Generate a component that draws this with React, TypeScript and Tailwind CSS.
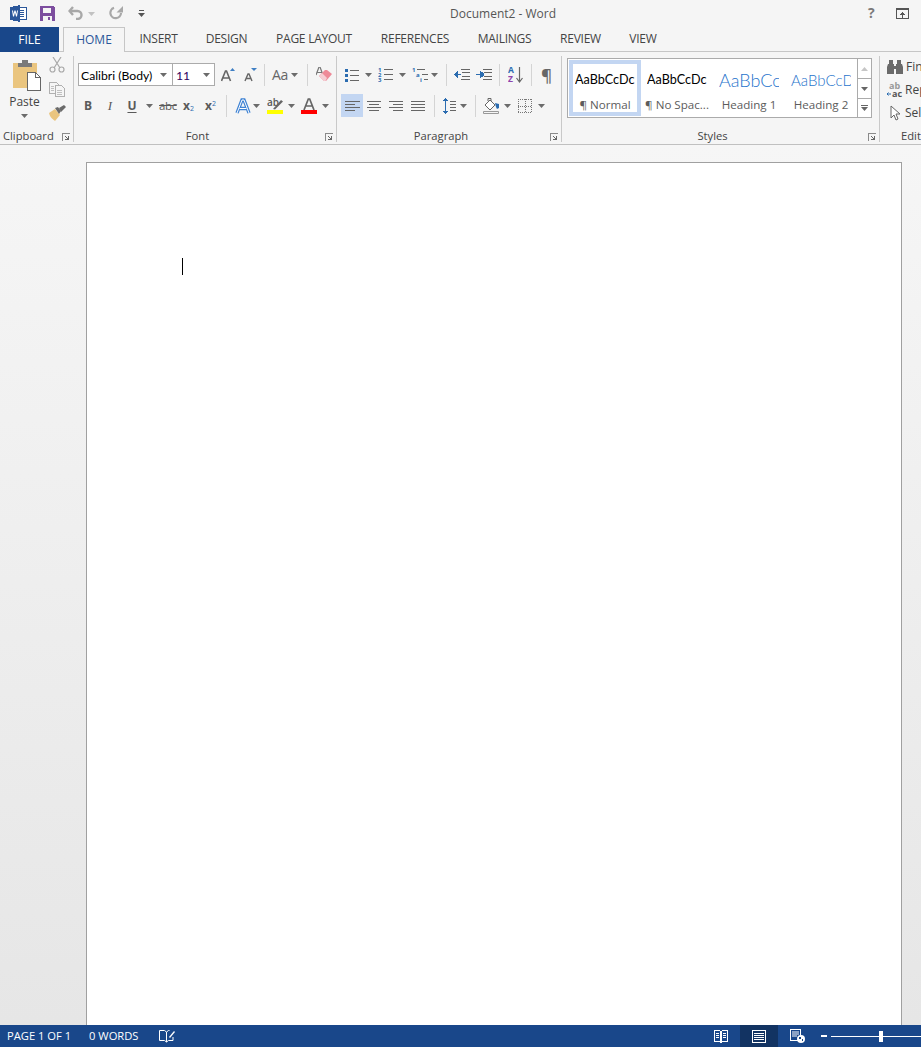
import React from "react";

const G = "#666666";
const Caret = ({ c = "#6b6b6b", cls = "" }: { c?: string; cls?: string }) => (
  <svg width="7" height="4" viewBox="0 0 7 4" className={"shrink-0 " + cls}><path d="M0 0h7L3.5 4z" fill={c} /></svg>
);
const Launcher = () => (
  <svg width="8" height="8" viewBox="0 0 8 8" className="shrink-0" shapeRendering="crispEdges">
    <path d="M0 0h8v1H1v7H0z" fill="#8a8a8a" />
    <path d="M3 3h1v1h1v1h1V3h1v4H3V6h2V5H4V4H3z" fill="#666" />
  </svg>
);
const VSep = ({ cls = "" }: { cls?: string }) => <div className={"w-px h-[22px] bg-[#d4d4d4] shrink-0 " + cls} />;
const Lines = ({ rows, w = 16, h = 14 }: { rows: [number, number, number][]; w?: number; h?: number }) => (
  <svg width={w} height={h} viewBox={`0 0 ${w} ${h}`} shapeRendering="crispEdges" className="shrink-0">
    {rows.map(([x, y, l], i) => <rect key={i} x={x} y={y} width={l} height={1} fill={G} />)}
  </svg>
);
const Group = ({ w, label, children, center }: { w: string; label: string; children: React.ReactNode; center?: string }) => (
  <div className={"flex flex-col h-[86px] mt-[4px] border-r border-[#c9c9c9] shrink-0 " + w}>
    <div className="flex-1 min-h-0">{children}</div>
    <div className={"flex items-center h-[12px] text-[11.2px] leading-[12px] text-[#444] " + (center || "")}>{label}</div>
  </div>
);

const tabs: [string, string][] = [
  ["INSERT", "w-[67px]"], ["DESIGN", "w-[69px]"], ["PAGE LAYOUT", "w-[106px]"], ["REFERENCES", "w-[96px]"],
  ["MAILINGS", "w-[83px]"], ["REVIEW", "w-[69px]"], ["VIEW", "w-[56px]"],
];

const StyleItem = ({ sample, label, sel, cls }: { sample: string; label: string; sel?: boolean; cls: string }) => (
  <div className={"w-[72px] flex flex-col items-center shrink-0 h-[56px] bg-white " + (sel ? "border-[4px] border-[#c3d6f2]" : "border-[4px] border-white")}>
    <div className="w-[60px] h-[20px] mt-[6px] shrink-0 overflow-hidden whitespace-nowrap flex items-center">
      <span className={cls}>{sample}</span>
    </div>
    <div className="text-[11.6px] h-[16px] shrink-0 leading-[16px] text-[#5c5c5c] whitespace-nowrap mt-[7px]">{label}</div>
  </div>
);

export default function App() {
  return (
    <div className="w-[921px] h-[1047px] flex flex-col overflow-hidden bg-[#f5f5f5] font-['Open_Sans',sans-serif] text-[12px] text-[#444]">
      {/* title bar */}
      <div className="h-[27px] flex items-center shrink-0 relative">
        <svg width="17" height="17" viewBox="0 0 17 17" className="ml-[10px] -mt-px" shapeRendering="crispEdges">
          <rect x="5.500" y="2.500" width="11" height="12" fill="#fff" stroke="#2b579a" />
          <path d="M10 5h4M10 7h4M10 9h4M10 11h4" stroke="#2b579a" />
          <path d="M0 2l10-2v17L0 15z" fill="#2b579a" />
          <path d="M2 5.500l1 6h1l1-4 1 4h1l1-6H7l-.5 3.500L5.500 5.500h-1L3.500 9 3 5.500z" fill="#fff" shapeRendering="auto" />
        </svg>
        <svg width="15" height="15" viewBox="0 0 15 15" className="ml-[13px] -mt-px" shapeRendering="crispEdges">
          <path d="M0 0h13l2 2v13H0z" fill="#7d4e9f" />
          <rect x="3" y="2" width="8" height="5" fill="#f5f5f5" />
          <rect x="3" y="10" width="9" height="5" fill="#f5f5f5" />
          <rect x="8" y="11" width="2" height="3" fill="#7d4e9f" />
        </svg>
        <svg width="15" height="14" viewBox="0 0 15 14" className="ml-[13px] -mt-px">
          <path d="M5 1L1.500 5 5 9" fill="none" stroke="#a8a8a8" strokeWidth="2.400" />
          <path d="M2 5h7.500a4 4 0 0 1 0 8H8" fill="none" stroke="#a8a8a8" strokeWidth="2.400" />
        </svg>
        <Caret c="#c2c2c2" cls="ml-[5px]" />
        <svg width="14" height="14" viewBox="0 0 14 14" className="ml-[14px] -mt-px">
          <path d="M5 1.800A5.300 5.300 0 1 0 12 7" fill="none" stroke="#a8a8a8" strokeWidth="2.200" />
          <path d="M14 0v6.500H7.500z" fill="#a8a8a8" />
        </svg>
        <svg width="7" height="7" viewBox="0 0 7 7" className="ml-[15px]" shapeRendering="crispEdges">
          <rect x="1" y="0" width="5" height="1" fill="#555" />
          <path d="M0 3h7L3.500 7z" fill="#555" shapeRendering="auto" />
        </svg>
        <div className="absolute left-[450px] top-[6px] text-[12px] leading-[16px] text-[#555] whitespace-nowrap">Document2 - Word</div>
        <div className="absolute left-[868px] top-[5px] text-[14px] leading-[16px] font-bold text-[#7a7a7a]">?</div>
        <svg width="13" height="11" viewBox="0 0 13 11" className="absolute left-[896px] top-[8px]" shapeRendering="crispEdges">
          <rect x="0.500" y="0.500" width="12" height="10" fill="none" stroke="#555" />
          <rect x="0" y="0" width="13" height="2" fill="#555" />
          <path d="M6 4h1v1h1v1h1v1H7v3H6V7H4V6h1V5h1z" fill="#555" />
        </svg>
      </div>

      {/* tabs */}
      <div className="h-[25px] flex items-stretch shrink-0 relative border-b border-[#c6c6c6]">
        <div className="w-[59px] h-[25px] bg-[#19478a] text-white flex items-center justify-center text-[12px]">FILE</div>
        <div className="ml-[4px] w-[62px] h-[25px] bg-[#f5f5f5] border border-b-0 border-[#c6c6c6] flex items-center justify-center text-[#2b579a] text-[12px] z-10">HOME</div>
        {tabs.map(([t, w]) => (
          <div key={t} className={"flex items-center justify-center text-[#444] text-[12px] tracking-[-0.25px] whitespace-nowrap " + w}>{t}</div>
        ))}
      </div>

      {/* ribbon */}
      <div className="h-[93px] flex shrink-0 border-b border-[#c0c0c0] overflow-hidden">
        <div className="relative">
          <Group w="w-[74px]" label="Clipboard" center="pl-[3px]">
            <div className="flex">
              <div className="w-[49px] flex flex-col items-center">
                <svg width="28" height="31" viewBox="0 0 28 31" className="mt-[4px] self-start ml-[13px]" shapeRendering="crispEdges">
                  <rect x="0" y="3" width="24" height="25" fill="#eac57f" />
                  <rect x="5" y="3" width="14" height="4" fill="#7a7a7a" />
                  <rect x="9" y="0" width="6" height="4" fill="#7a7a7a" />
                  <path d="M14.500 12.500h8l5 5v13h-13z" fill="#fff" stroke="#666" />
                  <path d="M22.500 12.500v5h5" fill="none" stroke="#666" />
                </svg>
                <div className="text-[12px] leading-[16px] text-[#444] mt-[3px]">Paste</div>
                <Caret cls="mt-[4px]" />
              </div>
              <div className="flex flex-col">
                <svg width="16" height="16" viewBox="0 0 16 16" className="mt-[1px]">
                  <path d="M4 0l7 11M12 0L5 11" stroke="#a9a9a9" strokeWidth="1.200" fill="none" />
                  <circle cx="3.500" cy="12.500" r="2.500" fill="none" stroke="#a9a9a9" strokeWidth="1.200" />
                  <circle cx="12.500" cy="12.500" r="2.500" fill="none" stroke="#a9a9a9" strokeWidth="1.200" />
                </svg>
                <svg width="16" height="15" viewBox="0 0 16 15" className="mt-[9px]" shapeRendering="crispEdges">
                  <path d="M.5.500h7l2 2v9h-9z" fill="#f5f5f5" stroke="#b0b0b0" />
                  <path d="M6.500 3.500h6l3 3v8h-9z" fill="#f5f5f5" stroke="#b0b0b0" />
                  <path d="M2 4h3M2 6h3M2 8h3M8 8h5M8 10h5M8 12h5" stroke="#c0c0c0" />
                </svg>
                <svg width="17" height="16" viewBox="0 0 17 16" className="mt-[8px]">
                  <path d="M0 8l6-4 5 6-5 6C5 15 1 13 0 8z" fill="#eac57f" />
                  <path d="M6 3l3-1 3 4-2 3z" fill="#6a6a6a" />
                  <path d="M10 3l5-3 2 2-5 5z" fill="#6a6a6a" />
                </svg>
              </div>
            </div>
          </Group>
          <div className="absolute right-[4px] top-[81px]"><Launcher /></div>
        </div>

        <div className="relative">
          <Group w="w-[263px]" label="Font" center="justify-center pr-[15px]">
            <div className="flex items-center h-[23px] mt-[7px] ml-[4px]">
              <div className="w-[95px] h-[23px] bg-white border border-[#ababab] flex items-center">
                <span className="ml-[2px] mt-[3px] w-[79px] font-['Lato',sans-serif] text-[12.2px] leading-[16px] text-black whitespace-nowrap">Calibri (Body)</span>
                <Caret />
              </div>
              <div className="w-[43px] h-[23px] -ml-px bg-white border border-[#ababab] flex items-center">
                <span className="ml-[3px] mt-[3px] w-[27px] font-['Lato',sans-serif] text-[12.2px] leading-[16px] text-[#300060]">11</span>
                <Caret />
              </div>
              <svg width="14" height="14" viewBox="0 0 14 14" className="ml-[6px] mt-[1px]">
                <path d="M.5 13L4.500 3h1L9.500 13M2 10h6" fill="none" stroke={G} strokeWidth="1.600" />
                <path d="M9 3l2.500-3L14 3z" fill="#3f7fc4" />
              </svg>
              <svg width="13" height="14" viewBox="0 0 13 14" className="ml-[9px] mt-[1px]">
                <path d="M1 13l3-7h1l3 7M2.200 10.500h4.600" fill="none" stroke={G} strokeWidth="1.400" />
                <path d="M7 0h6l-3 3z" fill="#3f7fc4" />
              </svg>
              <VSep cls="ml-[7px]" />
              <span className="ml-[7px] w-[17px] text-[14px] text-[#666] tracking-[-0.3px] leading-[16px]">Aa</span>
              <Caret cls="ml-[2px]" />
              <VSep cls="ml-[9px]" />
              <svg width="16" height="15" viewBox="0 0 16 15" className="ml-[8px]">
                <path d="M0 8L3 0h1l3 8M1.500 5.500h4" fill="none" stroke="#777" strokeWidth="1.200" />
                <path d="M3 9l6-6h2l5 4-6 7H8z" fill="#ee8a98" />
                <path d="M3 9l3-3 5 5-1.500 3H8z" fill="#f5cdd3" />
              </svg>
            </div>
            <div className="flex items-center h-[23px] mt-[8px] text-[#5a5a5a]">
              <span className="w-[12px] ml-[8px] text-center text-[12px] font-bold">B</span>
              <span className="w-[12px] ml-[10px] text-center italic font-['Liberation_Serif',serif] text-[13px]">I</span>
              <span className="w-[12px] ml-[10px] text-center text-[12px] font-bold underline underline-offset-2">U</span>
              <Caret cls="ml-[8px]" />
              <span className="w-[18px] ml-[6px] text-[11.5px] line-through tracking-[-0.4px] leading-[12px]">abc</span>
              <span className="ml-[6px] w-[14px] text-[12px] font-bold leading-[12px]">x<sub className="text-[7px] text-[#2b6cb0] font-normal">2</sub></span>
              <span className="ml-[8px] w-[14px] text-[12px] font-bold leading-[12px]">x<sup className="text-[7px] text-[#2b6cb0] font-normal">2</sup></span>
              <VSep cls="ml-[7px]" />
              <svg width="16" height="16" viewBox="0 0 16 16" className="ml-[8px]">
                <path d="M2 15L7 2h2l5 13M4.500 10.500h7" fill="none" stroke="#3f83d4" strokeWidth="3.400" />
                <path d="M2 15L7 2h2l5 13M4.500 10.500h7" fill="none" stroke="#fff" strokeWidth="1" />
              </svg>
              <Caret cls="ml-[2px]" />
              <div className="w-[16px] ml-[7px] flex flex-col items-start">
                <svg width="16" height="12" viewBox="0 0 16 12">
                  <text x="0" y="8" fontSize="10" fill="#555" fontFamily="Open Sans" fontWeight="600">ab</text>
                  <path d="M6 11l8-9 2 1.500-8 8z" fill="#666" />
                </svg>
                <div className="w-[16px] h-[4px] bg-[#ffff00]" />
              </div>
              <Caret cls="ml-[5px]" />
              <div className="w-[16px] ml-[6px] flex flex-col items-center">
                <svg width="12" height="12" viewBox="0 0 12 12">
                  <path d="M1 12L5.300 1h1.400L11 12M3 8h6" fill="none" stroke="#666" strokeWidth="1.700" />
                </svg>
                <div className="w-[16px] h-[4px] bg-[#ff0000]" />
              </div>
              <Caret cls="ml-[5px]" />
            </div>
          </Group>
          <div className="absolute right-[4px] top-[81px]"><Launcher /></div>
        </div>

        <div className="relative">
          <Group w="w-[225px]" label="Paragraph" center="justify-center pr-[16px]">
            <div className="flex items-center h-[23px] mt-[7px]">
              <svg width="14" height="14" viewBox="0 0 14 14" className="ml-[8px]" shapeRendering="crispEdges">
                <path d="M0 1h3v3H0zM0 6h3v3H0zM0 11h3v3H0z" fill="#2b6cb0" />
                <path d="M5 2h9v1H5zM5 7h9v1H5zM5 12h9v1H5z" fill={G} />
              </svg>
              <Caret cls="ml-[6px]" />
              <svg width="15" height="15" viewBox="0 0 15 15" className="ml-[6px]">
                <text x="0" y="5" fontSize="6" fill="#2b6cb0" fontWeight="700">1</text>
                <text x="0" y="10" fontSize="6" fill="#2b6cb0" fontWeight="700">2</text>
                <text x="0" y="15" fontSize="6" fill="#2b6cb0" fontWeight="700">3</text>
                <path d="M6 2.500h9M6 7.500h9M6 12.500h9" stroke={G} />
              </svg>
              <Caret cls="ml-[6px]" />
              <svg width="16" height="15" viewBox="0 0 16 15" className="ml-[6px]">
                <text x="0" y="5" fontSize="6" fill="#2b6cb0" fontWeight="700">1</text>
                <text x="4" y="10" fontSize="6" fill="#2b6cb0" fontWeight="700">a</text>
                <text x="8" y="15" fontSize="6" fill="#2b6cb0" fontWeight="700">i</text>
                <path d="M5 2.500h8M10 7.500h6M12 12.500h4" stroke={G} />
              </svg>
              <Caret cls="ml-[3px]" />
              <VSep cls="ml-[8px]" />
              <svg width="16" height="11" viewBox="0 0 16 11" className="ml-[7px]" shapeRendering="crispEdges">
                <path d="M7 0h9v1H7zM8 3h8v1H8zM8 7h8v1H8zM7 10h9v1H7z" fill={G} />
                <path d="M0 5h7v1H0zM1 4h2v3H1zM2 3h2v5H2zM3 2h1v7H3z" fill="#2b6cb0" />
              </svg>
              <svg width="16" height="11" viewBox="0 0 16 11" className="ml-[6px]" shapeRendering="crispEdges">
                <path d="M7 0h9v1H7zM8 3h8v1H8zM8 7h8v1H8zM7 10h9v1H7z" fill={G} />
                <path d="M0 5h7v1H0zM6 4h2v3H6zM5 3h2v5H5zM4 2h1v7H4z" fill="#2b6cb0" />
              </svg>
              <VSep cls="ml-[7px]" />
              <svg width="16" height="17" viewBox="0 0 16 17" className="ml-[8px]">
                <text x="0" y="7" fontSize="8.500" fill="#2b6cb0" fontWeight="700">A</text>
                <text x="0" y="16" fontSize="8.500" fill="#8e44ad" fontWeight="700">Z</text>
                <path d="M11.500 1v14M8.500 12l3 4 3-4" fill="none" stroke={G} strokeWidth="1.200" />
              </svg>
              <VSep cls="ml-[7px]" />
              <span className="ml-[9px] w-[10px] text-[17px] leading-[16px] font-semibold text-[#666]">¶</span>
            </div>
            <div className="flex items-center h-[23px] mt-[8px]">
              <div className="ml-[4px] w-[22px] h-[23px] bg-[#c3d6f2] flex items-center justify-center">
                <Lines w={15} h={10} rows={[[0,0,15],[0,3,10],[0,6,15],[0,9,10]]} />
              </div>
              <div className="ml-[4px]"><Lines w={14} h={10} rows={[[0,0,14],[2,3,10],[0,6,14],[2,9,10]]} /></div>
              <div className="ml-[8px]"><Lines w={14} h={10} rows={[[0,0,14],[4,3,10],[0,6,14],[4,9,10]]} /></div>
              <div className="ml-[8px]"><Lines w={14} h={10} rows={[[0,0,14],[0,3,14],[0,6,14],[0,9,14]]} /></div>
              <VSep cls="ml-[9px]" />
              <svg width="14" height="16" viewBox="0 0 14 16" className="ml-[7px]" shapeRendering="crispEdges">
                <path d="M3 0h1v1h1v1h1v1H4v10h2v1H5v1H4v1H3v-1H2v-1H1v-1h2V3H1V2h1V1h1z" fill="#2b6cb0" />
                <path d="M8 3h6v1H8zM8 6h6v1H8zM8 9h6v1H8zM8 12h6v1H8z" fill={G} />
              </svg>
              <Caret cls="ml-[4px]" />
              <VSep cls="ml-[8px]" />
              <svg width="16" height="16" viewBox="0 0 16 16" className="ml-[7px]">
                <path d="M2 7l5-5 5 5-5 5z" fill="#fff" stroke={G} />
                <path d="M5 3V0.500h3V3" fill="none" stroke={G} />
                <path d="M12 5l4 1v4l-2 1-1-2z" fill="#2b6cb0" />
                <path d="M0.500 13.500h15v2H.5z" fill="#f5f5f5" stroke="#999" />
              </svg>
              <Caret cls="ml-[5px]" />
              <svg width="14" height="14" viewBox="0 0 14 14" className="ml-[7px]" shapeRendering="crispEdges">
                <path d="M0 .5h14M0 7h14M0 13.500h14M.5 0v14M7 0v14M13.500 0v14" stroke="#777" strokeDasharray="1 1" fill="none" />
              </svg>
              <Caret cls="ml-[6px]" />
            </div>
          </Group>
          <div className="absolute right-[4px] top-[81px]"><Launcher /></div>
        </div>

        <div className="relative">
          <Group w="w-[318px]" label="Styles" center="justify-center pr-[16px]">
            <div className="ml-[5px] mt-[2px] w-[305px] h-[60px] bg-white border border-[#ababab] flex items-start pl-px">
              <div className="flex pt-px">
                <StyleItem sel sample="AaBbCcDc" label="¶ Normal" cls="font-['Lato',sans-serif] text-[12.6px] text-black" />
                <StyleItem sample="AaBbCcDc" label="¶ No Spac..." cls="font-['Lato',sans-serif] text-[12.6px] text-black" />
                <StyleItem sample="AaBbCc" label="Heading 1" cls="font-['Lato',sans-serif] font-light text-[18px] text-[#1f74cc]" />
                <StyleItem sample="AaBbCcD" label="Heading 2" cls="font-['Lato',sans-serif] font-light text-[15px] text-[#1f74cc]" />
              </div>
              <div className="w-[14px] h-[58px] border-l border-[#ababab] flex flex-col shrink-0">
                <div className="h-[20px] flex items-center justify-center border-b border-[#ababab]"><svg width="7" height="4" viewBox="0 0 7 4"><path d="M0 4h7L3.500 0z" fill="#c6c6c6" /></svg></div>
                <div className="h-[20px] flex items-center justify-center border-b border-[#ababab]"><Caret c="#666" /></div>
                <div className="h-[18px] flex flex-col items-center justify-center gap-[1px]"><div className="w-[7px] h-px bg-[#666]" /><Caret c="#666" /></div>
              </div>
            </div>
          </Group>
          <div className="absolute right-[4px] top-[81px]"><Launcher /></div>
        </div>

        <div className="h-[86px] mt-[4px] flex flex-col w-[42px] shrink-0 overflow-hidden">
          <div className="flex-1 pl-[7px] pt-[3px] text-[12px] leading-[16px] whitespace-nowrap text-[#444]">
            <div className="flex items-center h-[16px]">
              <svg width="16" height="14" viewBox="0 0 16 14" className="shrink-0">
                <path d="M2 0h4v4H2zM10 0h4v4h-4zM1 4h6v10H0V7zM9 4h6l1 3v7H9zM7 6h2v3H7z" fill="#6a6a6a" />
              </svg>
              <span className="ml-[3px]">Find</span>
            </div>
            <div className="flex items-center h-[16px] mt-[7px]">
              <svg width="16" height="16" viewBox="0 0 16 16" className="shrink-0">
                <text x="2" y="7" fontSize="9" fill="#999" fontWeight="700">ab</text>
                <text x="5" y="15" fontSize="9" fill="#555" fontWeight="700">ac</text>
                <path d="M0 12h4M1.500 10.500L0 12l1.500 1.500" stroke="#2b6cb0" fill="none" />
              </svg>
              <span className="ml-[2px]">Replace</span>
            </div>
            <div className="flex items-center h-[16px] mt-[7px]">
              <svg width="16" height="16" viewBox="0 0 16 16" className="shrink-0">
                <path d="M4 1v12l3-3 2 5 2-1-2-5h4z" fill="#fff" stroke="#666" />
              </svg>
              <span className="ml-[2px]">Select</span>
            </div>
          </div>
          <div className="h-[12px] flex items-center pl-[21px] text-[11.2px] leading-[12px] text-[#444] whitespace-nowrap">Editing</div>
        </div>
      </div>

      {/* document area */}
      <div className="flex-1 min-h-0 overflow-hidden bg-gradient-to-b from-[#f6f6f6] to-[#e6e6e6] pl-[86px] pt-[17px]">
        <div className="w-[816px] h-[1000px] bg-white border border-[#a0a0a0] pl-[95px] pt-[95px]">
          <div className="w-px h-[17px] bg-black" />
        </div>
      </div>

      {/* status bar */}
      <div className="h-[22px] shrink-0 bg-[#19478a] flex items-center text-white text-[11.2px]">
        <span className="ml-[7px] w-[63px] whitespace-nowrap">PAGE 1 OF 1</span>
        <span className="ml-[19px] w-[50px] whitespace-nowrap">0 WORDS</span>
        <svg width="16" height="14" viewBox="0 0 16 14" className="ml-[20px]">
          <path d="M.5 1.500h5l2 1.500v10l-2-1.500h-5zM7.500 3l2-1.500h1M7.500 13l2-1.500h4.500V8" fill="none" stroke="#fff" />
          <path d="M10 8l5-6 1 1-5 6z" fill="#fff" />
        </svg>
        <svg width="14" height="13" viewBox="0 0 14 13" className="ml-[539px]" shapeRendering="crispEdges">
          <path d="M.5.500h5l1.500 1 1.500-1h5v11h-5l-1.500 1-1.500-1h-5z" fill="none" stroke="#fff" />
          <path d="M2 3h3v1H2zM2 5h3v1H2zM2 7h3v1H2zM9 3h3v1H9zM9 5h3v1H9zM9 7h3v1H9z" fill="#fff" />
          <rect x="6" y="1" width="2" height="11" fill="#fff" />
        </svg>
        <div className="ml-[12px] w-[38px] h-[22px] bg-[#123362] flex items-center justify-center">
          <svg width="14" height="13" viewBox="0 0 14 13" shapeRendering="crispEdges">
            <rect x=".5" y=".5" width="13" height="12" fill="none" stroke="#fff" />
            <path d="M2 3h10v1H2zM2 5h10v1H2zM2 7h10v1H2zM2 9h10v1H2z" fill="#fff" />
          </svg>
        </div>
        <svg width="15" height="14" viewBox="0 0 15 14" className="ml-[12px]">
          <rect x=".5" y=".5" width="10" height="11" fill="none" stroke="#fff" />
          <path d="M2 3h7M2 5h7M2 7h5" stroke="#fff" />
          <circle cx="11" cy="10" r="4" fill="#fff" />
          <path d="M9 8h2v2H9zM12 10h1v2h-1z" fill="#19478a" />
        </svg>
        <div className="ml-[16px] w-[6px] h-[2px] bg-white" />
        <div className="ml-[4px] w-[90px] h-px bg-white relative">
          <div className="absolute left-[48px] -top-[5px] w-[4px] h-[11px] bg-white" />
        </div>
      </div>
    </div>
  );
}
